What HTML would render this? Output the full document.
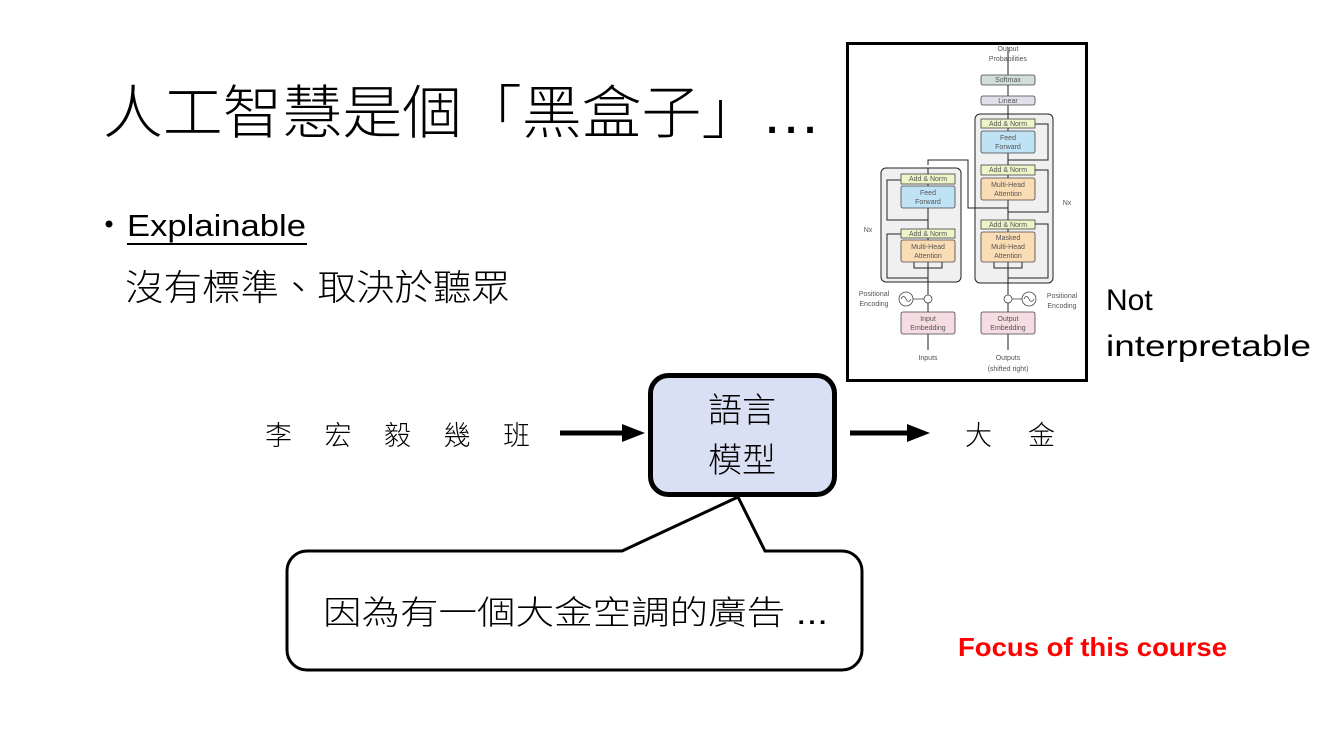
<!DOCTYPE html>
<html><head><meta charset="utf-8"><style>
html,body{margin:0;padding:0;background:#fff;}
svg{display:block;}
.cjk{font-family:"Liberation Sans","Noto Sans CJK TC",sans-serif;font-weight:300;}
.d{font-family:"Liberation Sans",sans-serif;font-size:7px;fill:#555;text-anchor:middle;}
</style></head><body>
<svg width="1334" height="750" viewBox="0 0 1334 750" xmlns="http://www.w3.org/2000/svg">
<rect width="1334" height="750" fill="#fff"/>
<text x="103" y="133" class="cjk" font-size="58" textLength="718" lengthAdjust="spacingAndGlyphs" fill="#000">人工智慧是個「黑盒子」…</text>
<circle cx="109" cy="224" r="3.5" fill="#000"/>
<text x="127" y="236" font-family="Liberation Sans,sans-serif" font-size="31" textLength="179" lengthAdjust="spacingAndGlyphs">Explainable</text>
<rect x="127" y="243" width="180" height="2" fill="#000"/>
<text x="125" y="300" class="cjk" font-size="36" textLength="385" lengthAdjust="spacingAndGlyphs">沒有標準、取決於聽眾</text>

<rect x="847.5" y="43.5" width="239" height="337" fill="#fff" stroke="#000" stroke-width="3"/>
<g stroke="#222" stroke-width="1" fill="none">
<rect x="881" y="168" width="80" height="114" rx="5" fill="#f0f0f0"/>
<rect x="975" y="114" width="78" height="169" rx="5" fill="#f0f0f0"/>
<line x1="928" y1="350" x2="928" y2="168"/>
<line x1="1008" y1="350" x2="1008" y2="48"/>
<path d="M928 165 V160 H968 V208 H1008"/>
<path d="M901 180 H887 V220 H928"/>
<path d="M901 234 H887 V278 H928"/>
<path d="M1035 124 H1048 V160 H1008"/>
<path d="M1035 170 H1048 V212 H1008"/>
<path d="M1035 224 H1048 V278 H1008"/>
<path d="M914 262 V268 H942 V262"/>
<path d="M994 262 V268 H1022 V262"/>
</g>
<g stroke="#444" stroke-width="0.8">
<rect x="901" y="174" width="54" height="10" fill="#eef3c8"/>
<rect x="901" y="186" width="54" height="22" rx="2" fill="#bfe3f5"/>
<rect x="901" y="229" width="54" height="9" fill="#eef3c8"/>
<rect x="901" y="240" width="54" height="22" rx="2" fill="#fadcb5"/>
<rect x="901" y="312" width="54" height="22" rx="2" fill="#f6dce3"/>
<rect x="981" y="75" width="54" height="10" rx="2" fill="#d2ded8"/>
<rect x="981" y="96" width="54" height="9" rx="2" fill="#e0e0ea"/>
<rect x="981" y="119" width="54" height="9" fill="#eef3c8"/>
<rect x="981" y="131" width="54" height="22" rx="2" fill="#bfe3f5"/>
<rect x="981" y="165" width="54" height="10" fill="#eef3c8"/>
<rect x="981" y="178" width="54" height="22" rx="2" fill="#fadcb5"/>
<rect x="981" y="220" width="54" height="9" fill="#eef3c8"/>
<rect x="981" y="232" width="54" height="30" rx="2" fill="#fadcb5"/>
<rect x="981" y="312" width="54" height="22" rx="2" fill="#f6dce3"/>
<circle cx="906" cy="299" r="7" fill="#fff"/>
<circle cx="928" cy="299" r="4" fill="#fff"/>
<circle cx="1008" cy="299" r="4" fill="#fff"/>
<circle cx="1029" cy="299" r="7" fill="#fff"/>
</g>
<g stroke="#444" stroke-width="0.8" fill="none">
<path d="M901 299 q2.5 -5 5 0 t5 0"/><path d="M1024 299 q2.5 -5 5 0 t5 0"/>
<path d="M913 299 H924"/><path d="M1012 299 H1022"/>
</g>
<text class="d" x="1008" y="51">Output</text>
<text class="d" x="1008" y="61">Probabilities</text>
<text class="d" x="1008" y="82">Softmax</text>
<text class="d" x="1008" y="103">Linear</text>
<text class="d" x="1008" y="126">Add &amp; Norm</text>
<text class="d" x="1008" y="140">Feed</text><text class="d" x="1008" y="149">Forward</text>
<text class="d" x="1008" y="172">Add &amp; Norm</text>
<text class="d" x="1008" y="187">Multi-Head</text><text class="d" x="1008" y="196">Attention</text>
<text class="d" x="1008" y="227">Add &amp; Norm</text>
<text class="d" x="1008" y="240">Masked</text><text class="d" x="1008" y="249">Multi-Head</text><text class="d" x="1008" y="258">Attention</text>
<text class="d" x="1008" y="321">Output</text><text class="d" x="1008" y="330">Embedding</text>
<text class="d" x="1008" y="360">Outputs</text><text class="d" x="1008" y="371">(shifted right)</text>
<text class="d" x="928" y="181">Add &amp; Norm</text>
<text class="d" x="928" y="195">Feed</text><text class="d" x="928" y="204">Forward</text>
<text class="d" x="928" y="236">Add &amp; Norm</text>
<text class="d" x="928" y="249">Multi-Head</text><text class="d" x="928" y="258">Attention</text>
<text class="d" x="928" y="321">Input</text><text class="d" x="928" y="330">Embedding</text>
<text class="d" x="928" y="360">Inputs</text>
<text class="d" x="874" y="296">Positional</text><text class="d" x="874" y="306">Encoding</text>
<text class="d" x="1062" y="298">Positional</text><text class="d" x="1062" y="308">Encoding</text>
<text class="d" x="868" y="232">Nx</text><text class="d" x="1067" y="205">Nx</text>

<text x="1106" y="310" font-family="Liberation Sans,sans-serif" font-size="30">Not</text>
<text x="1106" y="356" font-family="Liberation Sans,sans-serif" font-size="30" textLength="205" lengthAdjust="spacingAndGlyphs">interpretable</text>

<text x="265" y="445" class="cjk" font-size="27" textLength="265" lengthAdjust="spacing">李宏毅幾班</text>
<line x1="560" y1="433" x2="625" y2="433" stroke="#000" stroke-width="5"/>
<polygon points="622,424 645,433 622,442" fill="#000"/>
<line x1="850" y1="433" x2="910" y2="433" stroke="#000" stroke-width="5"/>
<polygon points="907,424 930,433 907,442" fill="#000"/>
<text x="965" y="445" class="cjk" font-size="27" textLength="90" lengthAdjust="spacing">大金</text>

<rect x="650.5" y="375.5" width="184" height="119" rx="18" fill="#dae0f3" stroke="#000" stroke-width="5"/>
<text x="742" y="422" class="cjk" font-size="34" text-anchor="middle">語言</text>
<text x="742" y="472" class="cjk" font-size="34" text-anchor="middle">模型</text>

<path d="M622 551 L738 497 L765 551 H842 A20 20 0 0 1 862 571 V650 A20 20 0 0 1 842 670 H307 A20 20 0 0 1 287 650 V571 A20 20 0 0 1 307 551 Z" fill="#fff" stroke="#000" stroke-width="3"/>
<text x="323" y="624" class="cjk" font-size="33" textLength="505" lengthAdjust="spacingAndGlyphs">因為有一個大金空調的廣告 ...</text>

<text x="958" y="656" font-family="Liberation Sans,sans-serif" font-size="26" font-weight="bold" fill="#ff0000" textLength="269" lengthAdjust="spacingAndGlyphs">Focus of this course</text>
</svg>
</body></html>
